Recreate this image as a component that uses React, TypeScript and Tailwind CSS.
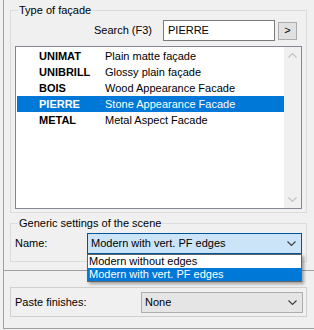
import React from "react";

const facades = [
  { code: "UNIMAT", label: "Plain matte façade" },
  { code: "UNIBRILL", label: "Glossy plain façade" },
  { code: "BOIS", label: "Wood Appearance Facade" },
  { code: "PIERRE", label: "Stone Appearance Facade" },
  { code: "METAL", label: "Metal Aspect Facade" },
];

function Chevron({ up = false, color = "#3c3c3c" }: { up?: boolean; color?: string }) {
  return (
    <svg width="9" height="5" viewBox="0 0 9 5" className="block">
      <path
        d={up ? "M0.5 4.5 L4.5 0.5 L8.5 4.5" : "M0.5 0.5 L4.5 4.5 L8.5 0.5"}
        fill="none"
        stroke={color}
        strokeWidth="1.1"
      />
    </svg>
  );
}

function GroupBox({
  title,
  className,
  children,
}: {
  title: string;
  className?: string;
  children: React.ReactNode;
}) {
  return (
    <div className={`relative border border-[#dcdcdc] ${className ?? ""}`}>
      <span className="absolute left-[7px] -top-[7px] px-[1px] bg-[#f0f0f0] leading-[13px] whitespace-nowrap">
        {title}
      </span>
      {children}
    </div>
  );
}

export default function App() {
  return (
    <div className="w-[314px] h-[330px] overflow-hidden bg-[#f0f0f0] text-black text-[11px] leading-[13px] font-['Liberation_Sans',Arial,sans-serif]">
      <div className="ml-[3px] h-[329px] flex flex-col border-l border-b border-[#a0a0a0]">
        {/* upper panel */}
        <div className="h-[270px] flex flex-col pt-[10px] pl-[6px] pr-[7px]">
          <GroupBox title="Type of façade" className="h-[203px] flex flex-col">
            <div className="mt-[9px] flex items-center justify-end pr-[9px]">
              <span>Search (F3)</span>
              <div className="ml-[11px] w-[112px] h-[21px] flex items-center border border-[#7a7a7a] bg-white pl-[4px]">
                PIERRE
              </div>
              <button className="ml-[3px] w-[19px] h-[18px] flex items-center justify-center border border-[#adadad] bg-[#e1e1e1] text-[11px] leading-none">
                &gt;
              </button>
            </div>
            <div className="mt-[5px] ml-[4px] w-[287px] h-[163px] flex border border-[#828790] bg-white">
              <div className="flex-1 pt-[1px] pl-[1px]">
                {facades.map((f) => {
                  const selected = f.code === "PIERRE";
                  return (
                    <div
                      key={f.code}
                      className={`h-[16px] flex items-center pl-[22px] ${
                        selected ? "bg-[#0078d7] text-white" : ""
                      }`}
                    >
                      <span className="w-[66px] font-bold">{f.code}</span>
                      <span>{f.label}</span>
                    </div>
                  );
                })}
              </div>
              <div className="w-[17px] flex flex-col justify-between bg-[#f0f0f0]">
                <div className="h-[17px] flex items-center justify-center">
                  <Chevron up color="#c0c0c0" />
                </div>
                <div className="h-[17px] flex items-center justify-center">
                  <Chevron color="#c0c0c0" />
                </div>
              </div>
            </div>
          </GroupBox>

          <GroupBox title="Generic settings of the scene" className="mt-[10px] h-[39px]">
            <div className="mt-[9px] pl-[4px] flex items-center">
              <span className="w-[72px]">Name:</span>
              <div className="relative z-10 w-[215px] h-[21px]">
                <div className="h-full flex items-center justify-between border border-[#005499] bg-[#cce4f7] pl-[3px] pr-[5px]">
                  <span>Modern with vert. PF edges</span>
                  <Chevron />
                </div>
                <div className="absolute left-0 top-full w-full border border-[#646464] bg-white shadow-[2px_2px_3px_rgba(0,0,0,0.35)]">
                  <div className="h-[13px] flex items-center pl-[1px]">Modern without edges</div>
                  <div className="h-[13px] flex items-center pl-[1px] bg-[#0078d7] text-white">
                    Modern with vert. PF edges
                  </div>
                </div>
              </div>
            </div>
          </GroupBox>
        </div>

        {/* lower panel */}
        <div className="flex-1 border-t border-[#a0a0a0] pl-[6px] pr-[7px] pt-[16px]">
          <div className="h-[30px] flex items-start pt-[4px] pl-[4px] border border-[#cfcfcf]">
            <span className="w-[126px] h-[21px] flex items-center">Paste finishes:</span>
            <div className="w-[162px] h-[21px] flex items-center justify-between border border-[#adadad] bg-[#e5e5e5] pl-[3px] pr-[5px]">
              <span>None</span>
              <Chevron />
            </div>
          </div>
        </div>
      </div>
    </div>
  );
}
